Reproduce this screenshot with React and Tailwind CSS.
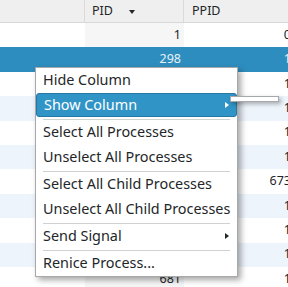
import React from "react";

const ppids = ["0", "1", "1", "1", "1", "1", "673", "1", "1", "1", "1"];
const pids = ["1", "298", "", "", "", "", "", "", "", "", "681"];

function Row({ i }) {
  const selected = i === 1;
  const alt = i % 2 === 1;
  let bg = alt ? "bg-[#edf4fb]" : "bg-white";
  let pidBg = alt ? "bg-[#e9eff5]" : "bg-[#f6f6f6]";
  if (selected) {
    bg = "bg-[#2e8dbf]";
    pidBg = "bg-[#2e8dbf]";
  }
  const txt = selected ? "text-[#e8f1f7]" : "text-[#232629]";
  return (
    <div className={`flex h-[24.4px] shrink-0 ${bg} ${txt}`}>
      <div className="w-[85px] shrink-0" />
      <div className={`w-[99px] shrink-0 flex items-center justify-end pr-[3px] ${pidBg}`}>
        {pids[i]}
      </div>
      <div className="w-[108px] shrink-0 flex items-center justify-end pr-[1px]">{ppids[i]}</div>
    </div>
  );
}

function Item({ children, hl, arrow }) {
  return (
    <div className="h-[25px] relative">
      <div
        className={`absolute inset-x-0 top-0 bottom-[1px] flex items-center pl-[7px] rounded-[3px] ${
          hl ? "bg-[#3194c7] border border-[#2677a3] pl-[6px] text-white" : "text-[#232629]"
        }`}
      >
        {children}
      </div>
      {arrow && (
        <div
          className={`absolute right-[8px] top-[9px] w-0 h-0 border-y-[3.5px] border-y-transparent border-l-[4px] ${
            hl ? "border-l-white" : "border-l-[#232629]"
          }`}
        />
      )}
    </div>
  );
}

function Sep() {
  return (
    <div className="h-[2px] flex items-center px-[7px]">
      <div className="h-px w-full bg-[#cfd1d3]" />
    </div>
  );
}

export default function App() {
  return (
    <div
      className="relative w-[288px] h-[287px] overflow-hidden bg-white"
      style={{ fontFamily: '"Noto Sans", sans-serif' }}
    >
      <div className="flex flex-col text-[12.5px]">
        <div className="flex h-[23px] shrink-0 bg-[#efefef] border-b border-[#d8d8d8] text-[#232629]">
          <div className="w-[85px] shrink-0 border-r border-[#dadada]" />
          <div className="w-[99px] shrink-0 border-r border-[#dadada] flex items-center pl-[7px]">
            <span>PID</span>
            <span className="ml-[16px] mt-[2px] w-0 h-0 border-x-[3.5px] border-x-transparent border-t-[4px] border-t-[#232629]" />
          </div>
          <div className="flex-1 flex items-center pl-[8px]">PPID</div>
        </div>
        {ppids.map((_, i) => (
          <Row key={i} i={i} />
        ))}
      </div>

      <div className="absolute left-[35px] top-[67px] w-[203px] bg-white border border-[#a6a8aa] text-[14.4px] leading-[20px] shadow-[3px_3px_6px_rgba(0,0,0,0.35)]">
        <Item>Hide Column</Item>
        <Item hl arrow>
          Show Column
        </Item>
        <Sep />
        <Item>Select All Processes</Item>
        <Item>Unselect All Processes</Item>
        <Sep />
        <Item>Select All Child Processes</Item>
        <Item>Unselect All Child Processes</Item>
        <Sep />
        <Item arrow>Send Signal</Item>
        <Sep />
        <Item>Renice Process...</Item>
      </div>

      <div className="absolute left-[230px] top-[96px] w-[49px] h-[6px] bg-white border border-[#a6a8aa] shadow-[2px_2px_4px_rgba(0,0,0,0.3)]" />
    </div>
  );
}
